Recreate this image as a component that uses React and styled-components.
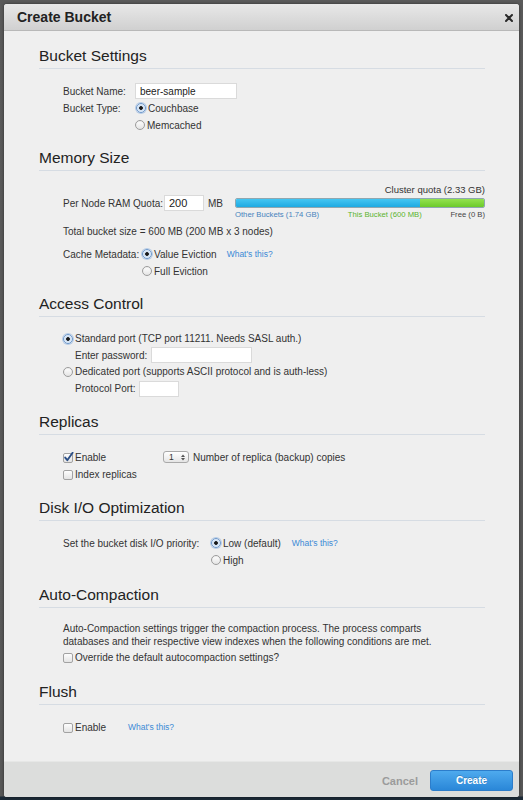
import React from 'react';
import styled, { createGlobalStyle } from 'styled-components';

const GlobalStyle = createGlobalStyle`
  html, body { margin: 0; padding: 0; }
  body {
    background: #595959;
    font-family: "Liberation Sans", Arial, sans-serif;
    color: #333;
  }
`;

const Overlay = styled.div`
  width: 523px;
  height: 800px;
  box-sizing: border-box;
  padding: 4px 4px 3px 4px;
  background: linear-gradient(to bottom, #5a5a5a 0, #575757 796px, #1c2a37 797px);
  display: flex;
`;

const Dialog = styled.div`
  flex: 1;
  display: flex;
  flex-direction: column;
  background: #efefef;
  border-radius: 3px;
  overflow: hidden;
  box-shadow: 0 0 3px rgba(0,0,0,0.5);
`;

const Header = styled.div`
  height: 26px;
  flex: none;
  border-bottom: 1px solid #b8b8b8;
  background: linear-gradient(to bottom, #e8e8e8, #d0d0d0);
  display: flex;
  align-items: center;
  justify-content: space-between;
  padding: 0 6px 0 13px;
`;

const Title = styled.h1`
  margin: 0;
  font-size: 14px;
  font-weight: bold;
  color: #222;
  line-height: 26px;
`;

const CloseButton = styled.span`
  display: flex;
  width: 8px;
  height: 8px;
  margin-top: 1px;
`;

const Body = styled.div`
  flex: 1;
  padding: 16px 34px 0 35px;
`;

const Section = styled.section`
  margin-top: ${p => p.$gap || 0}px;
`;

const SectionTitle = styled.h2`
  margin: 0;
  font-size: 15.5px;
  font-weight: normal;
  line-height: 18px;
  padding-bottom: 3px;
  border-bottom: 1px solid #d6dce3;
  color: #222;
`;

const Content = styled.div`
  padding-left: 24px;
  padding-top: ${p => p.$pt ?? 13.5}px;
  font-size: 10px;
`;

const Row = styled.div`
  display: flex;
  align-items: center;
  height: ${p => p.$h || 17}px;
  margin-top: ${p => p.$mt || 0}px;
  padding-left: ${p => p.$indent || 0}px;
  white-space: nowrap;
`;

const Label = styled.span`
  flex: none;
  width: ${p => p.$w}px;
`;

const TextInput = styled.input`
  flex: none;
  width: ${p => p.$w}px;
  height: 16px;
  box-sizing: border-box;
  border: 1px solid #dadada;
  background: #fff;
  font-family: "Liberation Sans", Arial, sans-serif;
  font-size: ${p => p.$fs || 10}px;
  color: #222;
  padding: 0 4px;
  margin: 0;
  outline: none;
`;

const Radio = styled.span`
  flex: none;
  width: 10px;
  height: 10px;
  box-sizing: border-box;
  border-radius: 50%;
  margin-right: 2px;
  border: 1px solid ${p => (p.$checked ? '#6c98cc' : '#9c9c9c')};
  background: ${p =>
    p.$checked
      ? 'radial-gradient(circle, #1a1a1a 0 1.5px, #cfe0f3 2.2px, #f6f9fd 100%)'
      : 'linear-gradient(#ffffff, #e4e4e4)'};
  box-shadow: ${p =>
    p.$checked ? '0 0 0 1px rgba(120,165,220,0.45)' : 'inset 0 1px 1px rgba(0,0,0,0.06)'};
`;

const CheckSvg = styled.svg`
  flex: none;
  width: 11px;
  height: 11px;
`;

const Checkbox = ({ checked }) => (
  <CheckSvg viewBox="0 0 11 11">
    <defs>
      <linearGradient id="cbg" x1="0" y1="0" x2="0" y2="1">
        <stop offset="0" stopColor="#ffffff" />
        <stop offset="1" stopColor="#e2e2e2" />
      </linearGradient>
    </defs>
    <rect x="0.5" y="1.5" width="9" height="9" rx="1.5" fill="url(#cbg)" stroke="#a2a2a2" />
    {checked && (
      <path d="M2.2 5.6 L4.3 8.2 L9.6 0.8" fill="none" stroke="#2c4f86" strokeWidth="1.9" strokeLinecap="round" strokeLinejoin="round" />
    )}
  </CheckSvg>
);

const CheckLabel = styled.span`
  flex: none;
  width: ${p => (p.$w ? `${p.$w}px` : 'auto')};
  margin-left: 1px;
`;

const Link = styled.a`
  font-size: 8.5px;
  color: #3b8ad6;
  text-decoration: none;
  margin-left: ${p => p.$ml ?? 10}px;
`;

const QuotaRow = styled.div`
  display: flex;
  align-items: flex-start;
`;

const QuotaLeft = styled.div`
  display: flex;
  align-items: center;
  height: 17px;
  margin-top: 11.5px;
`;

const Unit = styled.span`
  margin-left: 4px;
`;

const QuotaBlock = styled.div`
  margin-left: auto;
  width: 250px;
  display: flex;
  flex-direction: column;
`;

const QuotaCaption = styled.div`
  text-align: right;
  font-size: 9.5px;
  line-height: 13px;
  color: #333;
`;

const Bar = styled.div`
  margin-top: 2px;
  height: 10px;
  box-sizing: border-box;
  border: 1px solid #8fa7b0;
  border-radius: 2px;
  overflow: hidden;
  display: flex;
`;

const BarSegment = styled.div`
  height: 100%;
  background: ${p => p.$bg};
`;

const Legend = styled.div`
  margin-top: 2px;
  display: flex;
  justify-content: space-between;
  font-size: 7.7px;
  line-height: 10px;
`;

const LegendItem = styled.span`
  color: ${p => p.$color};
`;

const Paragraph = styled.p`
  margin: 0;
  line-height: 13.5px;
`;

const SelectBox = styled.span`
  flex: none;
  display: inline-flex;
  align-items: center;
  justify-content: space-between;
  width: 26px;
  height: 12px;
  box-sizing: border-box;
  border: 1px solid #a9a9a9;
  border-radius: 3px;
  background: linear-gradient(#ffffff, #e5e5e5);
  padding: 0 3px 0 5px;
  font-size: 8.5px;
  margin-right: 4px;
`;

const Footer = styled.div`
  flex: none;
  height: 34px;
  border-top: 1px solid #e6e7e6;
  background: #dcdddc;
  display: flex;
  align-items: center;
  justify-content: flex-end;
  padding: 1px 6px 0 0;
`;

const CancelButton = styled.span`
  font-size: 11px;
  font-weight: bold;
  color: #9b9b9b;
  margin-right: 12px;
  margin-top: 2px;
`;

const CreateButton = styled.span`
  width: 83px;
  height: 21px;
  box-sizing: border-box;
  border: 1px solid #2c7dcb;
  border-radius: 3px;
  background: linear-gradient(to bottom, #4eaaee, #2a87d8);
  color: #fff;
  font-size: 10px;
  font-weight: bold;
  display: flex;
  align-items: center;
  justify-content: center;
  text-shadow: 0 -1px 0 rgba(0,0,0,0.2);
`;

export default function App() {
  return (
    <>
      <GlobalStyle />
      <Overlay>
        <Dialog>
          <Header>
            <Title>Create Bucket</Title>
            <CloseButton>
              <svg width="8" height="8" viewBox="0 0 8 8">
                <path d="M1 1 L7 7 M7 1 L1 7" stroke="#2a2a2a" strokeWidth="2" strokeLinecap="round" />
              </svg>
            </CloseButton>
          </Header>
          <Body>
            <Section>
              <SectionTitle>Bucket Settings</SectionTitle>
              <Content>
                <Row>
                  <Label $w={72}>Bucket Name:</Label>
                  <TextInput $w={102} $fs={10} readOnly value="beer-sample" />
                </Row>
                <Row>
                  <Label $w={73}>Bucket Type:</Label>
                  <Radio $checked />
                  <span>Couchbase</span>
                </Row>
                <Row $indent={72}>
                  <Radio />
                  <span>Memcached</span>
                </Row>
              </Content>
            </Section>

            <Section $gap={15.5}>
              <SectionTitle>Memory Size</SectionTitle>
              <Content $pt={12}>
                <QuotaRow>
                  <QuotaLeft>
                    <Label $w={101}>Per Node RAM Quota:</Label>
                    <TextInput $w={40} $fs={11} readOnly value="200" />
                    <Unit>MB</Unit>
                  </QuotaLeft>
                  <QuotaBlock>
                    <QuotaCaption>Cluster quota (2.33 GB)</QuotaCaption>
                    <Bar>
                      <BarSegment style={{ width: '74%' }} $bg="linear-gradient(#45c6f2, #1eaae2)" />
                      <BarSegment style={{ width: '26%' }} $bg="linear-gradient(#93e24f, #6cca2b)" />
                    </Bar>
                    <Legend>
                      <LegendItem $color="#4583bd">Other Buckets (1.74 GB)</LegendItem>
                      <LegendItem $color="#5ab42e">This Bucket (600 MB)</LegendItem>
                      <LegendItem $color="#444">Free (0 B)</LegendItem>
                    </Legend>
                  </QuotaBlock>
                </QuotaRow>
                <Row $mt={2.5}>Total bucket size = 600 MB (200 MB x 3 nodes)</Row>
                <Row $mt={6}>
                  <Label $w={79}>Cache Metadata:</Label>
                  <Radio $checked />
                  <span>Value Eviction</span>
                  <Link href="#">What's this?</Link>
                </Row>
                <Row $indent={79}>
                  <Radio />
                  <span>Full Eviction</span>
                </Row>
              </Content>
            </Section>

            <Section $gap={15.5}>
              <SectionTitle>Access Control</SectionTitle>
              <Content>
                <Row $h={16.5}>
                  <Radio $checked />
                  <span>Standard port (TCP port 11211. Needs SASL auth.)</span>
                </Row>
                <Row $h={16.5} $indent={12}>
                  <Label $w={76}>Enter password:</Label>
                  <TextInput $w={101} type="password" readOnly value="" />
                </Row>
                <Row $h={16.5}>
                  <Radio />
                  <span>Dedicated port (supports ASCII protocol and is auth-less)</span>
                </Row>
                <Row $h={17} $indent={12}>
                  <Label $w={64}>Protocol Port:</Label>
                  <TextInput $w={40} readOnly value="" />
                </Row>
              </Content>
            </Section>

            <Section $gap={16}>
              <SectionTitle>Replicas</SectionTitle>
              <Content>
                <Row>
                  <Checkbox checked />
                  <CheckLabel $w={88}>Enable</CheckLabel>
                  <SelectBox>
                    <span>1</span>
                    <svg width="4" height="7" viewBox="0 0 4 7">
                      <path d="M0 3 L2 0.5 L4 3 Z M0 4 L2 6.5 L4 4 Z" fill="#555" />
                    </svg>
                  </SelectBox>
                  <span>Number of replica (backup) copies</span>
                </Row>
                <Row>
                  <Checkbox />
                  <CheckLabel>Index replicas</CheckLabel>
                </Row>
              </Content>
            </Section>

            <Section $gap={16.5}>
              <SectionTitle>Disk I/O Optimization</SectionTitle>
              <Content>
                <Row>
                  <Label $w={148}>Set the bucket disk I/O priority:</Label>
                  <Radio $checked />
                  <span>Low (default)</span>
                  <Link href="#" $ml={11}>What's this?</Link>
                </Row>
                <Row $indent={148}>
                  <Radio />
                  <span>High</span>
                </Row>
              </Content>
            </Section>

            <Section $gap={17}>
              <SectionTitle>Auto-Compaction</SectionTitle>
              <Content $pt={14}>
                <Paragraph>
                  Auto-Compaction settings trigger the compaction process. The process comparts
                  <br />
                  databases and their respective view indexes when the following conditions are met.
                </Paragraph>
                <Row>
                  <Checkbox />
                  <CheckLabel>Override the default autocompaction settings?</CheckLabel>
                </Row>
              </Content>
            </Section>

            <Section $gap={17.5}>
              <SectionTitle>Flush</SectionTitle>
              <Content>
                <Row>
                  <Checkbox />
                  <CheckLabel $w={53}>Enable</CheckLabel>
                  <Link href="#" $ml={0}>What's this?</Link>
                </Row>
              </Content>
            </Section>
          </Body>
          <Footer>
            <CancelButton>Cancel</CancelButton>
            <CreateButton>Create</CreateButton>
          </Footer>
        </Dialog>
      </Overlay>
    </>
  );
}
